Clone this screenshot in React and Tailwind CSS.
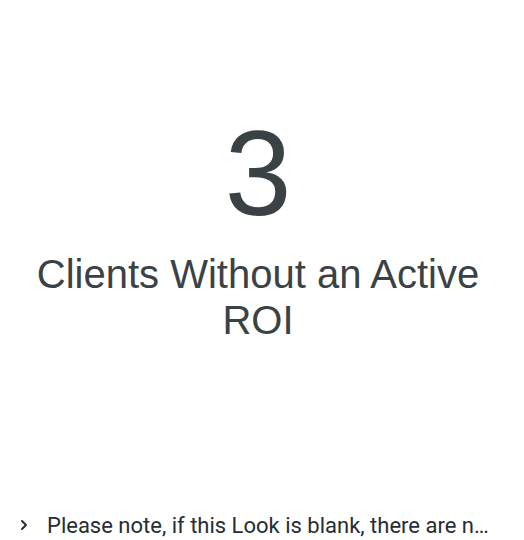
import { ChevronRight } from 'lucide-react';

export default function App() {
  return (
    <div className="h-[540px] w-[524px] bg-white flex flex-col overflow-hidden">
      <div className="flex-1 flex flex-col items-center justify-center text-center text-[#3a4245] font-['Liberation_Sans',Arial,sans-serif] pb-[48px] pr-[8px]">
        <div className="text-[120px] leading-[120px]">3</div>
        <div className="text-[40px] leading-[46px] px-6 mt-[18px]">
          Clients Without an Active ROI
        </div>
      </div>
      <div className="h-[36px] flex items-center gap-[15px] pl-[16px] pr-[26px] pt-[6px] text-[#262d33] font-['Roboto',sans-serif] text-[22px]">
        <ChevronRight className="w-[16px] h-[16px] shrink-0" strokeWidth={3} />
        <span className="truncate">Please note, if this Look is blank, there are no clients without an active ROI.</span>
      </div>
    </div>
  );
}
